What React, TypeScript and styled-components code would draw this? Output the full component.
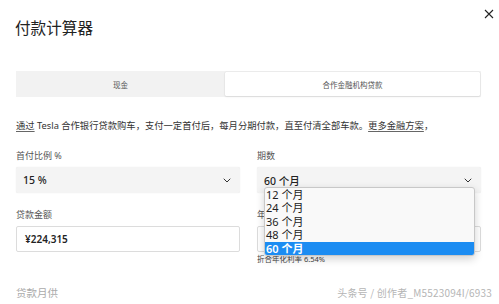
import styled, { createGlobalStyle } from 'styled-components';

const GlobalStyle = createGlobalStyle`
  html, body {
    margin: 0;
    padding: 0;
    background: #ffffff;
  }
  body {
    font-family: "Noto Sans", "Noto Sans CJK SC", sans-serif;
    color: #222;
  }
`;

const Page = styled.div`
  width: 499px;
  height: 304px;
  box-sizing: border-box;
  padding: 0 18px 0 16px;
  position: relative;
  overflow: hidden;
  background: #fff;
`;

const Header = styled.div`
  display: flex;
  justify-content: space-between;
  align-items: flex-start;
  height: 71px;
`;

const Title = styled.h1`
  margin: 17px 0 0 -1px;
  font-size: 15.6px;
  font-weight: 400;
  line-height: 22px;
  color: #222;
`;

const Close = styled.button`
  margin: 8px -14px 0 0;
  padding: 0;
  width: 12px;
  height: 12px;
  border: none;
  background: none;
  display: flex;
  align-items: center;
  justify-content: center;
`;

const Tabs = styled.div`
  display: flex;
  height: 26px;
  background: #f2f2f2;
  padding: 1px 1px 1px 0;
  box-sizing: border-box;
`;

const Tab = styled.div<{ $active?: boolean; $grow: number }>`
  flex: ${(p) => p.$grow};
  display: flex;
  align-items: center;
  justify-content: center;
  font-size: 7.5px;
  color: #555;
  background: ${(p) => (p.$active ? '#fff' : 'transparent')};
  box-shadow: ${(p) => (p.$active ? '0 0 1px rgba(0,0,0,0.25), 0 1px 2px rgba(0,0,0,0.08)' : 'none')};
  border-radius: 1px;
`;

const Intro = styled.p`
  margin: 22px 0 0;
  font-size: 9.3px;
  line-height: 14px;
  color: #333;
  white-space: nowrap;
`;

const Link = styled.span`
  text-decoration: underline;
  text-decoration-color: #666;
  text-underline-offset: 2px;
`;

const Grid = styled.div`
  display: grid;
  grid-template-columns: 224px 224px;
  column-gap: 17px;
  row-gap: 16px;
  margin-top: 17px;
`;

const Field = styled.div`
  display: flex;
  flex-direction: column;
  position: relative;
`;

const Label = styled.label`
  font-size: 9px;
  line-height: 12px;
  color: #555;
  margin-bottom: 5px;
  height: 12px;
`;

const Select = styled.div`
  height: 26px;
  box-sizing: border-box;
  background: #f4f4f4;
  border-radius: 2px;
  box-shadow: 0 0 1px rgba(0,0,0,0.12);
  display: flex;
  align-items: center;
  justify-content: space-between;
  padding: 0 9px 0 7px;
  font-size: 10.5px;
  color: #222;
  font-weight: 500;
`;

const Input = styled.div`
  height: 26px;
  box-sizing: border-box;
  background: #fff;
  border: 1px solid #dcdcdc;
  border-radius: 2px;
  display: flex;
  align-items: center;
  padding: 0 8px;
  font-size: 10px;
  color: #222;
  font-weight: 600;
`;

const Note = styled.div`
  font-size: 7.5px;
  color: #444;
  margin-top: 2px;
  line-height: 10px;
`;

const Menu = styled.ul`
  position: absolute;
  left: 7px;
  top: 37px;
  width: 209px;
  margin: 0;
  padding: 0;
  list-style: none;
  background: #f9f9f9;
  border: 1px solid #c8c8c8;
  border-radius: 3px;
  box-shadow: 0 3px 8px rgba(0,0,0,0.18);
  overflow: hidden;
  z-index: 5;
`;

const Option = styled.li<{ $selected?: boolean }>`
  height: 13.4px;
  line-height: 13.4px;
  font-size: 11px;
  padding-left: 1px;
  color: ${(p) => (p.$selected ? '#fff' : '#222')};
  background: ${(p) => (p.$selected ? '#1b8cf2' : 'transparent')};
  font-weight: ${(p) => (p.$selected ? 600 : 400)};
`;

const Footer = styled.div`
  display: flex;
  justify-content: space-between;
  align-items: center;
  margin-top: 21px;
`;

const FooterLabel = styled.div`
  font-size: 10.5px;
  color: #aaa;
`;

const Watermark = styled.div`
  font-size: 10px;
  color: #b5b5b5;
  margin-right: -11px;
  font-family: "Noto Sans CJK SC", sans-serif;
  letter-spacing: 0.2px;
`;

const Chevron = () => (
  <svg width="8" height="5" viewBox="0 0 8 5" fill="none">
    <path d="M1 1l3 3 3-3" stroke="#333" strokeWidth="1" strokeLinecap="round" strokeLinejoin="round" />
  </svg>
);

const terms = ['12 个月', '24 个月', '36 个月', '48 个月', '60 个月'];

export default function App() {
  return (
    <>
      <GlobalStyle />
      <Page>
        <Header>
          <Title>付款计算器</Title>
          <Close aria-label="关闭">
            <svg width="10" height="10" viewBox="0 0 10 10">
              <path d="M1 1l8 8M9 1l-8 8" stroke="#222" strokeWidth="1.1" />
            </svg>
          </Close>
        </Header>
        <Tabs>
          <Tab $grow={209}>现金</Tab>
          <Tab $grow={255} $active>合作金融机构贷款</Tab>
        </Tabs>
        <Intro>
          <Link>通过</Link> Tesla 合作银行贷款购车，支付一定首付后，每月分期付款，直至付清全部车款。<Link>更多金融方案</Link>，
        </Intro>
        <Grid>
          <Field>
            <Label>首付比例 %</Label>
            <Select>
              <span>15 %</span>
              <Chevron />
            </Select>
          </Field>
          <Field>
            <Label>期数</Label>
            <Select>
              <span>60 个月</span>
              <Chevron />
            </Select>
            <Menu>
              {terms.map((t) => (
                <Option key={t} $selected={t === '60 个月'}>{t}</Option>
              ))}
            </Menu>
          </Field>
          <Field>
            <Label>贷款金额</Label>
            <Input>¥224,315</Input>
          </Field>
          <Field>
            <Label>年</Label>
            <Input />
            <Note>折合年化利率 6.54%</Note>
          </Field>
        </Grid>
        <Footer>
          <FooterLabel>贷款月供</FooterLabel>
          <Watermark>头条号 / 创作者_M5523094I/6933</Watermark>
        </Footer>
      </Page>
    </>
  );
}
